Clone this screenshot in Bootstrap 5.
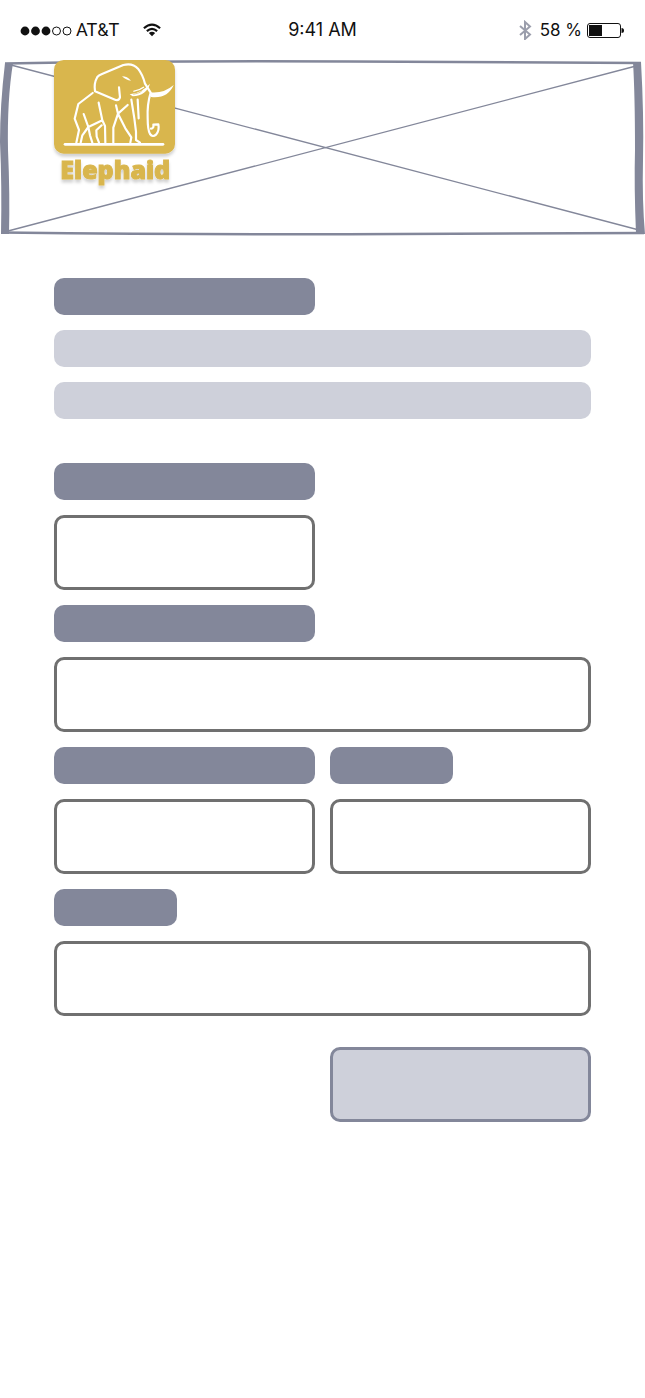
<!DOCTYPE html>
<html lang="en">
<head>
<meta charset="utf-8">
<meta name="viewport" content="width=device-width, initial-scale=1">
<title>Elephaid</title>
<link href="https://cdn.jsdelivr.net/npm/bootstrap@5.3.0/dist/css/bootstrap.min.css" rel="stylesheet">
<style>
  :root { --slate: #83879a; --mist: #ced0da; --line: #707070; --gold: #d9b64e; }
  body { font-family: "Inter", "Liberation Sans", sans-serif; background: #fff; }
  .status { height: 60px; padding: 0 20px; font-size: 18px; line-height: 24px; color: #111; }
  .status svg { display: block; flex: none; }
  .carrier { font-family: Roboto, sans-serif; }
  .charge { font-size: 17px; }
  .banner { height: 176px; }
  .frame { display: block; width: 100%; height: 100%; }
  .brand { position: absolute; top: -10px; left: 44px; }
  .brand svg { display: block; }
  .sheet { padding: 42px 54px 48px; }
  .stack { --bs-gutter-x: 15px; --bs-gutter-y: 15px; }
  form.stack { margin-top: 29px; }
  .bar { display: block; height: 37px; border-radius: 10px; background: var(--slate); }
  .bar-soft { background: var(--mist); }
  .field, .send { height: 75px; border: 3px solid var(--line); border-radius: 10px; }
  .send { background: var(--mist); border-color: var(--slate); }
  .send:hover { background: var(--mist); border-color: var(--slate); }
</style>
</head>
<body>
<header>
  <div class="status row gx-0 align-items-center">
    <div class="col d-flex align-items-center">
      <svg width="52" height="12" viewBox="0 0 52 12" aria-hidden="true">
        <g fill="#111"><circle cx="5" cy="7" r="4.4"/><circle cx="15.500" cy="7" r="4.400"/><circle cx="26" cy="7" r="4.400"/></g>
        <g fill="none" stroke="#111"><circle cx="36.500" cy="7" r="4"/><circle cx="47" cy="7" r="4"/></g>
      </svg>
      <span class="carrier ms-1">AT&amp;T</span>
      <svg class="ms-4" width="18" height="16" viewBox="0 0 20 16" aria-label="Wi-Fi">
        <g fill="none" stroke="#111" stroke-width="2.400"><path d="M1 6Q10-2 19 6"/><path d="M4.300 9.300Q10 4.200 15.700 9.300"/></g>
        <path d="M6.500 11.300Q10 8.700 13.500 11.300L10 15Z" fill="#111"/>
      </svg>
    </div>
    <div class="col-auto">9:41 AM</div>
    <div class="col d-flex align-items-center justify-content-end">
      <svg width="14" height="20" viewBox="0 0 14 20" aria-label="Bluetooth"><path d="M2 6L12 14.500L7 19V2L12 6.500L2 15" fill="none" stroke="#9b9eac" stroke-width="2"/></svg>
      <span class="charge ms-2 me-1">58 %</span>
      <svg width="39" height="16" viewBox="0 0 39 16" aria-label="Battery">
        <rect x="1.500" y="1.500" width="33" height="14" rx="2.500" fill="none" stroke="#111"/>
        <rect x="3" y="3" width="13" height="11" fill="#111"/><path d="M35.500 6Q38 6 38 8.500T35.500 11Z" fill="#111"/>
      </svg>
    </div>
  </div>
  <div class="banner position-relative">
    <svg class="frame" viewBox="0 0 645 176" preserveAspectRatio="none" aria-hidden="true">
      <g fill="none" stroke="#83879a">
        <path d="M11 5L639 170M8 171L636 6" stroke-width="1.400"/>
        <path d="M5 3.500Q160 .5 350 1.500T641 3" stroke-width="2.500"/>
        <path d="M2 172.500Q220 175 400 174T644 173" stroke-width="2.500"/>
      </g>
      <path d="M5 3H13Q7 40 8 90Q10 135 9 174H1Q2 125 0 82Q0 45 5 3Z" fill="#83879a"/>
      <path d="M633 2H641Q644 55 643 100Q642 140 645 174H636Q634 125 635 90Q635 35 633 2Z" fill="#83879a"/>
    </svg>
    <a class="brand" href="#" aria-label="Elephaid">
      <svg width="144" height="145" viewBox="0 0 432 435">
        <defs><filter id="soft" x="-10%" y="-10%" width="120%" height="130%"><feDropShadow dx="0" dy="9" stdDeviation="5" flood-color="#000" flood-opacity=".18"/></filter></defs>
        <g filter="url(#soft)">
          <rect x="30" y="30" width="363" height="281" rx="29" fill="#d9b64e"/>
          <text x="49" y="386" font-family="Open Sans, sans-serif" font-weight="800" font-size="75" fill="#d9b64e" stroke="#d9b64e" stroke-width="3">Elephaid</text>
        </g>
        <g fill="none" stroke="#fff" stroke-width="6.500" stroke-linecap="round" stroke-linejoin="round">
          <path d="M63 283H357" stroke-width="8"/>
          <path d="M225 112L228 142Q226 152 215 150L153 124Q149 100 160 81Q164 76 174 72L238 45Q266 38 282 56Q296 74 303 101L320 128Q309 163 311 205Q311 240 318 252Q326 263 336 254Q347 242 343 223L328 224Q330 235 321 236"/>
          <path d="M146 129L103 162L92 206L105 240L97 278M119 192L133 231L115 256L110 278M133 231L175 211L164 158M175 211L183 228L184 278M133 231L138 256L145 278M173 226L157 241L158 260L165 278"/>
          <path d="M216 166L222 191L208 233V278M222 191L251 165M222 191L244 235L262 262L259 278"/>
          <path d="M262 149L271 205L276 245V270L288 278M281 149L284 205"/>
        </g>
        <path d="M234 79Q250 79 261 92Q246 91 234 79ZM257 133Q291 130 318 101Q308 136 266 139ZM318 127Q358 132 389 105Q371 147 321 141Z" fill="#fff"/>
        <path d="M270 128Q285 124 300 112L290 126Q280 131 268 133" fill="none" stroke="#d9b64e" stroke-width="2"/>
        <path d="M268 124Q285 122 300 111" fill="none" stroke="#fff" stroke-width="4"/>
      </svg>
    </a>
  </div>
</header>
<main class="sheet">
  <div class="row stack" aria-hidden="true">
    <div class="col-6"><div class="bar"></div></div>
    <div class="col-12"><div class="bar bar-soft"></div></div>
    <div class="col-12"><div class="bar bar-soft"></div></div>
  </div>
  <form class="row stack">
    <div class="col-6"><label class="bar" for="f1"></label></div>
    <div class="w-100 mt-0"></div>
    <div class="col-6"><input class="form-control field" id="f1" type="text" aria-label="First field"></div>
    <div class="w-100 mt-0"></div>
    <div class="col-6"><label class="bar" for="f2"></label></div>
    <div class="col-12"><input class="form-control field" id="f2" type="text" aria-label="Second field"></div>
    <div class="col-6"><label class="bar" for="f3"></label></div>
    <div class="col-3"><label class="bar" for="f4"></label></div>
    <div class="w-100 mt-0"></div>
    <div class="col-6"><input class="form-control field" id="f3" type="text" aria-label="Third field"></div>
    <div class="col-6"><input class="form-control field" id="f4" type="text" aria-label="Fourth field"></div>
    <div class="col-3"><label class="bar" for="f5"></label></div>
    <div class="col-12"><input class="form-control field" id="f5" type="text" aria-label="Fifth field"></div>
    <div class="col-6 offset-6 pt-3"><button class="btn send w-100" type="button" aria-label="Submit"></button></div>
  </form>
</main>
<script src="https://cdn.jsdelivr.net/npm/bootstrap@5.3.0/dist/js/bootstrap.bundle.min.js"></script>
</body>
</html>
